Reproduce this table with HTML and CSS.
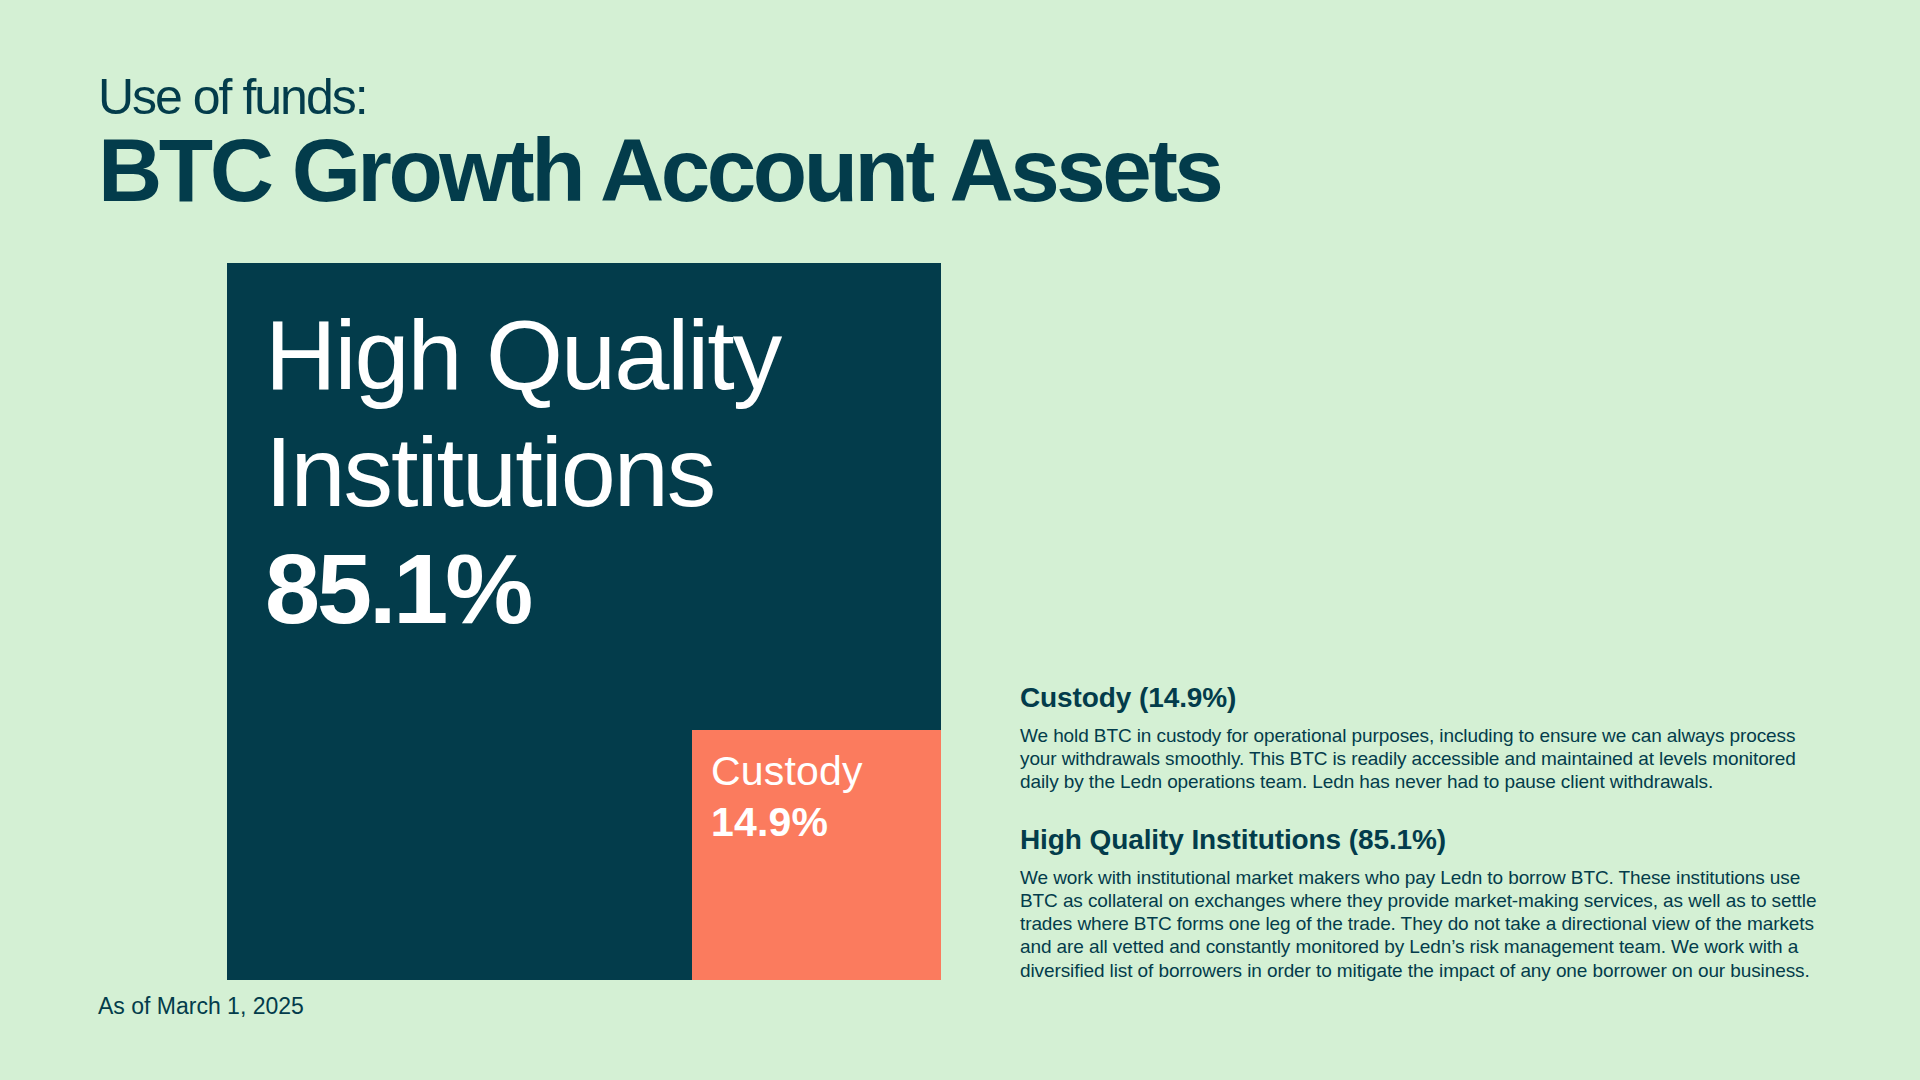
FILE: index.html
```html
<!DOCTYPE html>
<html lang="en">
<head>
<meta charset="utf-8">
<title>Use of funds: BTC Growth Account Assets</title>
<link rel="stylesheet" href="styles.css">
</head>
<body>
<main class="slide">
  <header class="title">
    <p class="title-kicker">Use of funds:</p>
    <h1 class="title-main">BTC Growth Account Assets</h1>
  </header>
  <section class="content">
    <div class="treemap">
      <div class="tile-main">
        <p class="tile-main-label">High Quality<br>Institutions</p>
        <p class="tile-main-value">85.1%</p>
      </div>
      <div class="tile-small">
        <p class="tile-small-label">Custody</p>
        <p class="tile-small-value">14.9%</p>
      </div>
    </div>
    <div class="legend">
      <div class="legend-item">
        <h2 class="legend-title">Custody (14.9%)</h2>
        <p class="legend-text">We hold BTC in custody for operational purposes, including to ensure we can always process<br>your withdrawals smoothly. This BTC is readily accessible and maintained at levels monitored<br>daily by the Ledn operations team. Ledn has never had to pause client withdrawals.</p>
      </div>
      <div class="legend-item">
        <h2 class="legend-title">High Quality Institutions (85.1%)</h2>
        <p class="legend-text">We work with institutional market makers who pay Ledn to borrow BTC. These institutions use<br>BTC as collateral on exchanges where they provide market-making services, as well as to settle<br>trades where BTC forms one leg of the trade. They do not take a directional view of the markets<br>and are all vetted and constantly monitored by Ledn’s risk management team. We work with a<br>diversified list of borrowers in order to mitigate the impact of any one borrower on our business.</p>
      </div>
    </div>
  </section>
  <p class="footnote">As of March 1, 2025</p>
</main>
</body>
</html>
```
FILE: styles.css
```css
* {
  box-sizing: border-box;
}

html, body {
  margin: 0;
  padding: 0;
}

body {
  width: 1920px;
  height: 1080px;
  overflow: hidden;
  background: #d4f0d4;
  color: #033c4b;
  font-family: "Liberation Sans", Arial, sans-serif;
}

.slide {
  padding: 72px 0 0 98px;
}

.title-kicker {
  margin: 0;
  font-size: 50px;
  line-height: 50px;
  font-weight: 400;
  letter-spacing: -2px;
}

.title-main {
  margin: 4px 0 0;
  font-size: 89px;
  line-height: 89px;
  font-weight: 700;
  letter-spacing: -3.5px;
}

.content {
  display: flex;
  align-items: flex-end;
  margin-top: 48px;
}

.treemap {
  margin-left: 129px;
  width: 714px;
  height: 717px;
  background: #033c4b;
  display: flex;
  flex-direction: column;
  justify-content: space-between;
  color: #ffffff;
}

.tile-main {
  padding: 33px 0 0 38px;
}

.tile-main-label,
.tile-main-value {
  margin: 0;
  font-size: 99px;
  line-height: 117px;
}

.tile-main-label {
  font-weight: 400;
  letter-spacing: -2px;
}

.tile-main-value {
  font-weight: 700;
  letter-spacing: -3.1px;
}

.tile-small {
  align-self: flex-end;
  width: 249px;
  height: 250px;
  background: #fb7b5e;
  padding: 16px 0 0 19px;
}

.tile-small-label,
.tile-small-value {
  margin: 0;
  font-size: 41px;
  line-height: 51px;
  letter-spacing: 0.2px;
}

.tile-small-label {
  font-weight: 400;
}

.tile-small-value {
  font-weight: 700;
}

.legend {
  margin-left: 79px;
  margin-bottom: -2px;
  width: 820px;
}

.legend-item + .legend-item {
  margin-top: 30px;
}

.legend-title {
  margin: 0 0 10px;
  font-size: 28px;
  line-height: 32px;
  font-weight: 700;
  letter-spacing: -0.1px;
}

.legend-text {
  margin: 0;
  font-size: 19px;
  line-height: 23.3px;
  white-space: nowrap;
  letter-spacing: -0.1px;
}

.footnote {
  margin: 12px 0 0;
  font-size: 23px;
  line-height: 28px;
  letter-spacing: 0;
}
```
